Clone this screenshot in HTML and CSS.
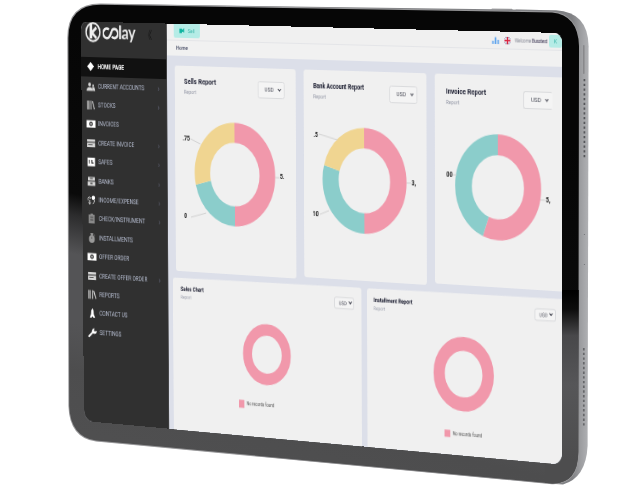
FILE: index.html
```html
<!DOCTYPE html>
<html lang="en">
<head>
<meta charset="utf-8">
<title>Koolay dashboard</title>
<link rel="stylesheet" href="styles.css">
</head>
<body>
<svg class="device" viewBox="0 0 630 485" aria-hidden="true">
  <defs>
    <linearGradient id="bezel" gradientUnits="userSpaceOnUse" x1="75" y1="30" x2="-18" y2="440">
      <stop offset="0" stop-color="#060606"/>
      <stop offset=".38" stop-color="#0a0a0a"/>
      <stop offset=".43" stop-color="#2c2c2d"/>
      <stop offset=".52" stop-color="#545456"/>
      <stop offset=".68" stop-color="#545456"/>
      <stop offset=".79" stop-color="#4d4d4e"/>
      <stop offset="1" stop-color="#505051"/>
    </linearGradient>
    <linearGradient id="bezel-right" gradientUnits="userSpaceOnUse" x1="0" y1="290" x2="0" y2="480">
      <stop offset="0" stop-color="#000"/>
      <stop offset=".1" stop-color="#0c0c0c"/>
      <stop offset=".24" stop-color="#48484a"/>
      <stop offset=".5" stop-color="#565658"/>
      <stop offset=".9" stop-color="#4d4d4e"/>
    </linearGradient>
    <linearGradient id="sideWrap" gradientUnits="userSpaceOnUse" x1="572" y1="0" x2="589" y2="0">
      <stop offset="0" stop-color="#808184"/>
      <stop offset=".5" stop-color="#9c9da0"/>
      <stop offset="1" stop-color="#b2b3b6"/>
    </linearGradient>
  </defs>
  <path d="M491 9.6l1-1.2 20 .4 1 1.4zM515 10.2l1-.8 24 .6 1 1.2z" fill="#a6a6a8"/>
  <path d="M100 4L556 10.2Q588 12 588.6 46L587.6 446Q586 478 563 484.4L548 483.6L96 441Z" fill="url(#sideWrap)"/>
  <path d="M102 3.6Q67.5 2.5 67.3 38L68.4 406Q69.5 438 96 441.6L552 484.2Q579 485 579 452L579.4 46Q579 14 552 11.6Z" fill="#98989a"/>
  <path d="M102 4.8Q68.5 4 68.4 38L69.2 406Q70.5 437 96 440.6L552 483.4Q578.2 484 578.3 452L579 46Q578 15 552 12.6Z" fill="url(#bezel)"/>
  <path d="M560 290H578.7L578.3 452Q577.6 484 552 483.4L545 482.8V463L560 455Z" fill="url(#bezel-right)"/>
  <rect x="583.1" y="45" width="1.4" height="29" rx=".7" fill="#858688"/>
  <path d="M584.4 79V159" stroke="#55565a" stroke-width="1.7" stroke-dasharray="2.2 2.55"/>
  <path d="M583.8 348V426" stroke="#66676a" stroke-width="1.7" stroke-dasharray="2.4 2.3"/>
  <circle cx="584.4" cy="234.5" r=".6" fill="#707174"/>
  <circle cx="584.4" cy="264.5" r=".6" fill="#707174"/>
</svg>

<svg class="sprite" aria-hidden="true">
  <symbol id="i-home" viewBox="0 0 12 10"><path d="M6 0l4.6 4.6L6 9.2 1.4 4.6z" fill="#fff"/></symbol>
  <symbol id="i-users" viewBox="0 0 12 10"><circle cx="4.5" cy="3" r="1.9"/><path d="M.2 9.5Q.5 5.8 4.5 5.8T8.8 9.5zM7.6 5.5h3.2l1 4H9.2z"/><circle cx="9.2" cy="4" r="1.2"/></symbol>
  <symbol id="i-books" viewBox="0 0 12 10"><path d="M1.4 .5V9.5M3.4 .5V9.5M6.2 .5V9.5M8 1l2.800 8.200" fill="none" stroke="currentColor" stroke-width="1.2"/></symbol>
  <symbol id="i-money" viewBox="0 0 12 10"><path fill-rule="evenodd" d="M0 1.5h12v7.4H0zM6 2.8a2.4 2.4 0 100 4.8 2.4 2.4 0 000-4.800z" fill="#fff"/><circle cx="6" cy="5.2" r="1.1" fill="#ddd"/></symbol>
  <symbol id="i-card" viewBox="0 0 12 10"><path fill-rule="evenodd" d="M.6 1h10.800v8H.6zM.6 3.4v1h10.800v-1zM2 6.2v.9h6v-.9z"/></symbol>
  <symbol id="i-sale" viewBox="0 0 12 10"><path fill-rule="evenodd" d="M1 .8h10v8.600H1zM2.700 3v3.800h1.200V3zM6 3v3.800h3V5.500H7.500V3z" fill="#fff"/></symbol>
  <symbol id="i-bank" viewBox="0 0 12 10"><path fill-rule="evenodd" d="M1.5 .5h9v3.700h-9zM4 1.600v.9h4v-.9zM1 5.200h10v4.300H1zM4.600 6.400v1.400h2.800V6.400z"/></symbol>
  <symbol id="i-income" viewBox="0 0 12 10"><path d="M3 1.5Q.4 3 1.5 5.500M9.800 5q1 2.400-2.400 4M3.400 5v4.200M2 7.500l1.400 1.900L5 7.500" fill="none" stroke="currentColor"/><circle cx="8.400" cy="2.700" r="2.300" fill="#fff"/><circle cx="4" cy="3" r="1"/></symbol>
  <symbol id="i-clip" viewBox="0 0 12 10"><path fill-rule="evenodd" d="M2 1h2.400V0h3.200v1H10v9H2zM4 3.500v.8h4v-.8zM4 6v.8h4V6z" fill="#8a8a8a"/></symbol>
  <symbol id="i-watch" viewBox="0 0 12 10"><circle cx="6" cy="6" r="3.900" fill="#999"/><path d="M4.600 0h2.800v1.400H4.600zM9 1.400l1.200 1.100" stroke="#999" fill="#999"/><path d="M6 3.800V6" stroke="#555"/></symbol>
  <symbol id="i-contact" viewBox="0 0 12 10"><path d="M6 0l1.500 2.600L7.800 6l2 3.700H7L6 8.200 5 9.700H2.200l2-3.700.3-3.400z" fill="#fff"/></symbol>
  <symbol id="i-wrench" viewBox="0 0 12 10"><path d="M1.400 9L6 5" stroke="#fff" stroke-width="2.200" stroke-linecap="round"/><path d="M8.800.4L7.800 2.800l1.200 1 2.500-.8Q11.700 6.500 8 6.200 4.800 5.900 5.300 2.900 5.900.2 8.800.4z" fill="#fff"/></symbol>
</svg>

<div class="screen">
  <nav class="sidebar">
    <div class="brand">
      <svg class="logo" viewBox="0 0 28 22"><circle cx="14" cy="10.5" r="9.300" fill="none" stroke="#eee" stroke-width="2"/><path d="M11.300 2V17" fill="none" stroke="#eee" stroke-width="3.600"/><path d="M18.500 5.800L12.500 11L18.500 16.500" fill="none" stroke="#eee" stroke-width="3"/></svg>
      <svg class="loop" viewBox="0 0 20 14"><path d="M8 3.300A4.600 4.600 0 1 0 8 10.700Q10 9 12 3.800A4.400 4.400 0 1 1 11.600 10" fill="none" stroke="#eee" stroke-width="2.500"/></svg>
      <span class="wordmark">lay</span>
      <span class="collapse">《</span>
    </div>
    <ul class="menu">
      <li class="active"><svg><use href="#i-home"/></svg><span>HOME PAGE</span></li>
      <li><svg><use href="#i-users"/></svg><span>CURRENT ACCOUNTS</span><i>›</i></li>
      <li><svg><use href="#i-books"/></svg><span>STOCKS</span><i>›</i></li>
      <li><svg><use href="#i-money"/></svg><span>INVOICES</span></li>
      <li><svg><use href="#i-card"/></svg><span>CREATE INVOICE</span><i>›</i></li>
      <li><svg><use href="#i-sale"/></svg><span>SAFES</span><i>›</i></li>
      <li><svg><use href="#i-bank"/></svg><span>BANKS</span><i>›</i></li>
      <li><svg><use href="#i-income"/></svg><span>INCOME/EXPENSE</span><i>›</i></li>
      <li><svg><use href="#i-clip"/></svg><span>CHECK/INSTRUMENT</span><i>›</i></li>
      <li><svg><use href="#i-watch"/></svg><span>INSTALLMENTS</span></li>
      <li><svg><use href="#i-money"/></svg><span>OFFER ORDER</span></li>
      <li><svg><use href="#i-card"/></svg><span>CREATE OFFER ORDER</span><i>›</i></li>
      <li><svg><use href="#i-books"/></svg><span>REPORTS</span></li>
      <li><svg><use href="#i-contact"/></svg><span>CONTACT US</span></li>
      <li><svg><use href="#i-wrench"/></svg><span>SETTINGS</span></li>
    </ul>
  </nav>

  <main class="main">
    <header class="topbar">
      <div class="sell"><svg viewBox="0 0 8 8"><path d="M.5 2h4v1.500l3-2.500v5.500l-3-1V7h-4z" fill="#10b5a0"/></svg>Sell</div>
      <div class="user">
        <svg class="bars" viewBox="0 0 10 8"><path d="M1.500 8V4.500M5 8V.5M8.500 8V3.500" stroke="#5aa2ee" stroke-width="2"/></svg>
        <svg class="flag" viewBox="0 0 8 8"><path fill="#283a78" d="M0 0h8v8H0z"/><path d="M0 0l8 8M8 0L0 8" stroke="#fff" stroke-width="1.600"/><path d="M4 0v8M0 4h8" stroke="#fff" stroke-width="2.600"/><path d="M4 0v8M0 4h8" stroke="#d8203c" stroke-width="1.600"/></svg>
        <span class="welcome">Welcome <b>Busotest</b></span>
        <span class="avatar">K</span>
      </div>
    </header>
    <div class="crumb">Home</div>

    <section class="row row-top">
      <article class="card c1">
        <div class="head"><div><h2>Sells Report</h2><p>Report</p></div><div class="select"><span>USD</span><i></i></div></div>
        <svg class="chart" viewBox="-76 -60 152 120">
          <g class="ring"><circle r="41.700" pathLength="360" class="pink" stroke-dasharray="180 180"/><circle r="41.700" pathLength="360" class="teal" stroke-dasharray="0 180 76.500 360"/><circle r="41.700" pathLength="360" class="gold" stroke-dasharray="0 256.500 103.500 360"/></g>
          <path class="lead" d="M-57-34l13 5M-57 45l20-5M52 1h5"/>
          <text x="-62.500" y="-32.500">.75</text><text x="-64" y="46">0</text><text x="60.500" y="2">5.</text>
        </svg>
      </article>
      <article class="card c2">
        <div class="head"><div><h2>Bank Account Report</h2><p>Report</p></div><div class="select"><span>USD</span><i></i></div></div>
        <svg class="chart" viewBox="-76 -60 152 120">
          <g class="ring"><circle r="41.700" pathLength="360" class="pink" stroke-dasharray="180 180"/><circle r="41.700" pathLength="360" class="teal" stroke-dasharray="0 180 105.500 360"/><circle r="41.700" pathLength="360" class="gold" stroke-dasharray="0 285.500 74.500 360"/></g>
          <path class="lead" d="M-56-44l23 5M-55 35l11-4M52 0h5"/>
          <text x="-60" y="-41.500">.5</text><text x="-60.500" y="37">10</text><text x="60.500" y="2">3,</text>
        </svg>
      </article>
      <article class="card c3">
        <div class="head"><div><h2>Invoice Report</h2><p>Report</p></div><div class="select"><span>USD</span><i></i></div></div>
        <svg class="chart" viewBox="-76 -60 152 120">
          <g class="ring"><circle r="40.800" pathLength="360" class="pink" stroke-dasharray="200.500 160"/><circle r="40.800" pathLength="360" class="teal" stroke-dasharray="0 200.500 159.500 360"/></g>
          <path class="lead" d="M-54-10h5M50 10h5"/>
          <text x="-57.500" y="-8.500">00</text><text x="59" y="12">5,</text>
        </svg>
      </article>
    </section>

    <section class="row row-bottom">
      <article class="card c4">
        <div class="head"><div><h2>Sales Chart</h2><p>Report</p></div><div class="select"><span>USD</span><i></i></div></div>
        <svg class="chart" viewBox="-40 -40 80 80"><circle r="24.700" class="pink"/></svg>
        <div class="legend"><b></b><span>No records found</span></div>
      </article>
      <article class="card c5">
        <div class="head"><div><h2>Installment Report</h2><p>Report</p></div><div class="select"><span>USD</span><i></i></div></div>
        <svg class="chart" viewBox="-40 -40 80 80"><circle r="29.300" class="pink"/></svg>
        <div class="legend"><b></b><span>No records found</span></div>
      </article>
    </section>
  </main>
</div>
</body>
</html>
```

FILE: styles.css
```css
* { box-sizing: border-box; margin: 0; padding: 0; }
body {
  position: relative;
  width: 630px;
  height: 485px;
  overflow: hidden;
  background: #fff;
  font-family: Roboto, "Liberation Sans", sans-serif;
}
.device { position: absolute; left: 0; top: 0; width: 630px; height: 485px; }
.sprite { position: absolute; width: 0; height: 0; }

/* Flat 600x410 dashboard projected onto the tablet glass */
.screen {
  display: flex;
  width: 600px;
  height: 410px;
  overflow: hidden;
  border-radius: 8px 9px 11px 12px;
  background: #dcdfe9;
  transform-origin: 0 0;
  transform: matrix3d(0.73161, 0.015053, 0, -0.00012466, 0.008603, 0.980834, 0, 0.000015307, 0, 0, 1, 0, 81, 21.5, 0, 1);
}

.sidebar { flex: none; width: 114px; background: #303030; border-right: 1px solid #4a4a4c; }
.brand { display: flex; height: 35.5px; align-items: flex-start; }
.logo { flex: none; width: 28px; height: 22px; margin: -.5px 0 0 2px; }
.loop { flex: none; width: 21px; height: 14.7px; margin: 4px 0 0 -1.5px; }
.wordmark { margin: -.5px 0 0 .5px; font: 700 18.5px/21px Lato, sans-serif; letter-spacing: -.3px; color: #eee; }
.collapse { margin: 4px 0 0 11px; font: 11px/14px "Noto Sans CJK SC", sans-serif; color: #141414; }
.menu { list-style: none; }
.menu li {
  display: flex;
  align-items: center;
  height: 19.4px;
  padding: 0 9px 0 5.5px;
  font-size: 6.4px;
  color: #b5bccf;
}
.menu li.active { height: 20.5px; background: #111; color: #fff; font-weight: 700; }
.menu svg { flex: none; width: 13px; height: 10px; margin-right: 3.5px; fill: #d6d6d6; color: #d6d6d6; }
.menu span { flex: 1; white-space: nowrap; letter-spacing: -.05px; }
.menu i { font-style: normal; font-size: 9px; line-height: 10px; color: #626578; }

.main { flex: 1; min-width: 0; background: #dcdfe9; }
.topbar {
  display: flex;
  justify-content: space-between;
  height: 16.5px;
  padding-left: 8.5px;
  background: #f0f0f0;
  border-bottom: 1px solid #e4e5e8;
}
.sell {
  display: flex;
  align-items: center;
  gap: 5px;
  width: 34px;
  height: 14px;
  padding-left: 7px;
  border-radius: 0 0 2px 2px;
  background: #b5ece6;
  color: #3cb5aa;
  font-size: 5.5px;
}
.sell svg { width: 7px; height: 7px; margin-top: -2px; }
.user { display: flex; align-items: center; gap: 6px; padding-top: 1px; }
.bars { width: 9px; height: 7px; }
.flag { width: 7px; height: 7px; margin-right: -1px; }
.welcome { width: 38px; font-size: 5px; letter-spacing: -.25px; white-space: nowrap; color: #8b8d99; }
.welcome b { color: #55506a; font-weight: 500; }
.avatar { width: 15px; height: 12px; margin-left: -4px; border-radius: 2px; background: #b5ece6; color: #3cb5aa; text-align: center; font-size: 6px; line-height: 12px; }
.crumb { height: 15px; padding-left: 12px; background: #f1f1f1; font-size: 5.7px; font-weight: 500; line-height: 15px; color: #444a63; }

.row { display: grid; align-items: start; }
.row-top { grid-template-columns: 155.5px 151.5px 151px; column-gap: 9.5px; padding: 10.5px 0 0 9.5px; height: 224.5px; }
.row-bottom { grid-template-columns: 239.5px 236px; column-gap: 7.5px; padding-left: 6px; transform: skewY(-.45deg); transform-origin: 0 0; }
.card { position: relative; display: flex; flex-direction: column; border-radius: 3px; background: #f0f0f0; }
.c1 { height: 206.5px; }
.c2 { height: 205px; }
.c3 { height: 202.5px; border-radius: 3px 0 0 3px; }
.c4, .c5 { height: 164px; }

.head { display: flex; justify-content: space-between; height: 46px; padding: 10.5px 14.5px 0 12.5px; }
h2 { font: 700 7.6px/10px Roboto, sans-serif; color: #17192c; white-space: nowrap; }
p { margin-top: 1px; font-size: 5.4px; line-height: 9px; color: #969aa8; }
.select {
  display: flex;
  align-items: center;
  justify-content: space-between;
  flex: none;
  width: 34px;
  height: 17px;
  margin-top: 2px;
  padding: 0 4px 0 8px;
  border: 1px solid #dadbdd;
  border-radius: 2.5px;
  background: #f4f4f4;
  font-size: 6.2px;
  color: #4a4c58;
}
.select i { width: 3px; height: 3px; border: solid #3c3e4a; border-width: 0 1px 1px 0; transform: translateY(-1px) rotate(45deg); }
.c2 .select { margin: 2px -3px 0 0; }
.c2 h2 { font-size: 6.8px; letter-spacing: -.1px; }
.c3 h2 { font-size: 7.3px; }
.c3 .head { padding-left: 14px; }
.c3 h2, .c3 p { transform: translateY(1px); }
.c3 .select { border-right-color: #f4f4f4; margin: 3px -3px 0 0; }

.chart { display: block; align-self: center; flex: none; overflow: visible; }
.row-top .chart { width: 152px; height: 120px; margin-top: .5px; }
.row-bottom .chart { width: 80px; height: 80px; }
.chart circle { fill: none; stroke-width: 20px; }
.ring { transform: rotate(-90deg); }
.pink { stroke: #f198ab; }
.teal { stroke: #8bcdcb; }
.gold { stroke: #f0d591; }
.lead { fill: none; stroke: #d2d2d2; stroke-width: 1px; }
.chart text { font: 700 6.5px Roboto, sans-serif; fill: #111; text-anchor: middle; }

.row-bottom .head { height: 34px; padding: 6.5px 8.5px 0 10px; }
.row-bottom h2 { font-size: 5.9px; line-height: 9px; letter-spacing: -.05px; }
.row-bottom p { margin-top: 0; font-size: 4.8px; line-height: 8px; }
.row-bottom .select { width: 25px; height: 12px; margin-top: 9px; padding: 0 3px 0 5px; font-size: 5.2px; }
.row-bottom .select i { width: 2.5px; height: 2.5px; }
.row-bottom .c5 .head { padding: 6.5px 9.5px 0 8px; }
.row-bottom .c5 .select { margin: 3px 1px 0 0; }
.row-bottom .c4 .select { margin-top: 3px; }
.row-bottom .c5 h2 { font-size: 5.8px; }
.c4 .chart { margin: -2px 0 0 2px; }
.c5 .chart { margin: 4px 2px 0 0; }
.row-bottom .c4 circle { stroke-width: 11.5px; }
.row-bottom .c5 circle { stroke-width: 13.6px; }

.legend { display: flex; align-items: center; align-self: center; gap: 3px; font-size: 4.7px; line-height: 8px; color: #555; white-space: nowrap; }
.legend span { letter-spacing: -.05px; }
.legend b { width: 7px; height: 7.5px; background: #f198ab; }
.c4 .legend { margin: 7px 24px 0 0; }
.c5 .legend { margin: 14.5px 3px 0 0; }
```
